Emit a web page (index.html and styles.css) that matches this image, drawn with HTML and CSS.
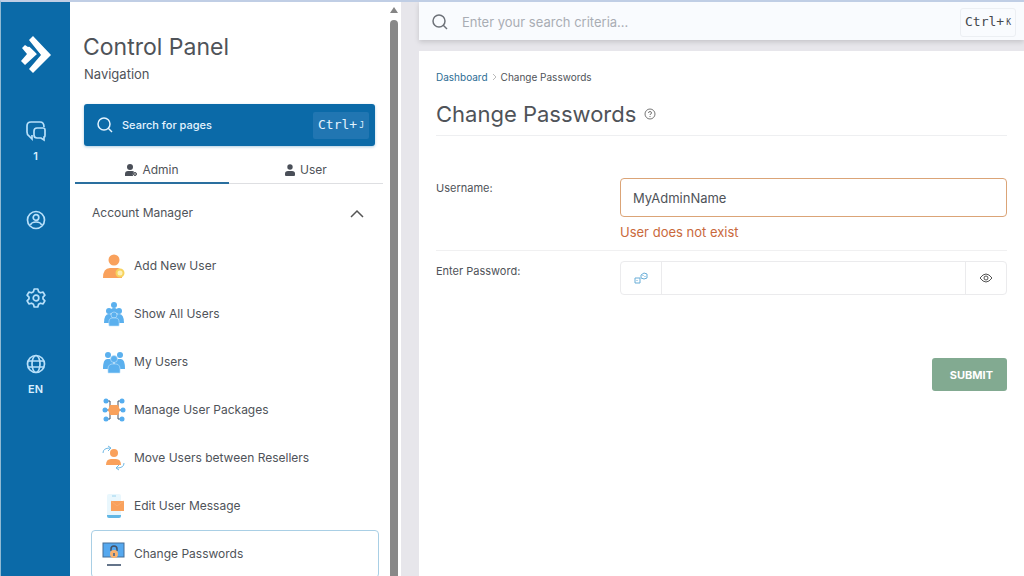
FILE: index.html
```
<!DOCTYPE html>
<html lang="en">
<head>
  <meta charset="UTF-8">
  <title>Change Passwords</title>
  <link rel="stylesheet" href="styles.css">
</head>
<body>
  <nav class="rail">
    <a href="#" class="logo" aria-label="Home">
      <svg width="32" height="40" viewBox="0 0 32 40">
        <path d="M9 5l4-4 18 19-18 18-4-4 12-14z" fill="#fff"/>
        <path d="M2 13l3-3 3 2 3-1 6 8-12 11-4-4 6-7z" fill="#fff"/>
        <path d="M7 8l12 11.500L7 32" fill="none" stroke="#0b6aa8" stroke-width="2"/>
      </svg>
    </a>
    <a href="#" class="rail-item messages" aria-label="Messages">
      <svg class="line-icon" width="22" height="22" viewBox="0 0 22 22">
        <path d="M7 15v4l-3-3q-2-1-2-4V6q0-4 4-4h9q4 0 4 5"/>
        <path d="M12 8h6q2 0 2 2v5q0 2-1 2v3l-3-2h-4q-3 0-3-3v-4q0-3 3-3z"/>
      </svg>
      <span>1</span>
    </a>
    <a href="#" class="rail-item account" aria-label="Account">
      <svg class="line-icon" width="22" height="22" viewBox="0 0 22 22">
        <circle cx="11" cy="11" r="8.500"/>
        <circle cx="11" cy="8.500" r="2.800"/>
        <path d="M5.500 16q1-3 5.500-3t5.500 3"/>
      </svg>
    </a>
    <a href="#" class="rail-item settings" aria-label="Settings">
      <svg class="line-icon" width="22" height="22" viewBox="0 0 22 22">
        <path d="M9.200 2h3.600l.8 2.800 1.800 1 2.700-.7 1.800 3.100-1.900 2 0 1.600 1.900 2-1.800 3.100-2.700-.7-1.800 1-.8 2.800H9.200l-.8-2.800-1.800-1-2.700.7-1.800-3.100 1.900-2 0-1.600-1.900-2 1.800-3.100 2.700.7 1.800-1z" stroke-linejoin="round"/>
        <circle cx="11" cy="11" r="2.800"/>
      </svg>
    </a>
    <a href="#" class="rail-item language" aria-label="Language">
      <svg class="line-icon" width="22" height="22" viewBox="0 0 22 22">
        <circle cx="11" cy="11" r="8.500"/>
        <ellipse cx="11" cy="11" rx="4" ry="8.500"/>
        <path d="M3 8h16M3 14h16"/>
      </svg>
      <span>EN</span>
    </a>
  </nav>

  <aside class="panel">
    <div class="panel-body">
      <h2>Control Panel</h2>
      <p class="subtitle">Navigation</p>

      <button class="page-search">
        <svg width="16" height="16" viewBox="0 0 16 16"><circle cx="7" cy="7" r="6"/><path d="M11 11l4 4"/></svg>
        <span>Search for pages</span>
        <kbd>Ctrl+<small>J</small></kbd>
      </button>

      <div class="tabs">
        <button class="tab active">
          <svg width="12" height="12" viewBox="0 0 12 12"><circle cx="5" cy="3" r="3"/><path d="M0 12V10q0-3 3-3h4q2 0 2 1-2 2-1 4z"/><circle cx="10" cy="10" r="1.500" fill="#aaa" stroke="#4a4f58"/></svg>
          Admin
        </button>
        <button class="tab">
          <svg width="10" height="12" viewBox="0 0 10 12"><circle cx="5" cy="3" r="2.700"/><path d="M0 11V9.500Q0 7 3 7h4q3 0 3 2.500V11q0 1-1 1H1q-1 0-1-1z"/></svg>
          User
        </button>
      </div>

      <button class="group">
        Account Manager
        <svg width="14" height="9" viewBox="0 0 14 9"><path d="M1 8l6-6 6 6"/></svg>
      </button>

      <ul class="menu">
        <li><a href="#">
          <svg width="24" height="26" viewBox="0 0 24 26">
            <circle cx="12" cy="7" r="5.500" fill="#f9a15c"/>
            <path d="M1 25q0-10 7-10h8q4 0 4 10z" fill="#f9a15c"/>
            <circle cx="18" cy="20" r="3.500" fill="#fdf0b8" stroke="#f7d35e" stroke-width="2"/>
          </svg>
          Add New User</a></li>
        <li><a href="#">
          <svg class="people" width="24" height="26" viewBox="0 0 24 26">
            <circle cx="12" cy="4" r="3"/><path d="M8 12q0-5 4-5t4 5z"/>
            <circle cx="7" cy="10" r="3"/><path d="M2 22q0-9 5-9t5 9z"/>
            <circle cx="17" cy="10" r="3"/><path d="M12 22q0-9 5-9t5 9z"/>
            <circle cx="12" cy="14" r="3" stroke="#c5e4fb"/><path d="M7 25q-1-8 3-8h4q4 0 3 8z" stroke="#c5e4fb"/>
          </svg>
          Show All Users</a></li>
        <li><a href="#">
          <svg class="people" width="24" height="26" viewBox="0 0 24 26">
            <circle cx="6" cy="6" r="3"/><path d="M1 20q0-10 4-10h3q4 0 4 10z"/>
            <circle cx="18" cy="6" r="3"/><path d="M12 20q0-10 4-10h3q4 0 4 10z"/>
            <circle cx="12" cy="10" r="3.500" stroke="#c5e4fb"/><path d="M6 24q-1-9 4-9h4q5 0 4 9z" stroke="#c5e4fb"/>
          </svg>
          My Users</a></li>
        <li><a href="#">
          <svg width="24" height="26" viewBox="0 0 24 26">
            <path d="M4 4h4v6h8V4h4M2 13h20M4 22h4v-6h8v6h4" fill="none" stroke="#475264"/>
            <path d="M8 8h8l2 5-2 5H8l-2-5z" fill="#f9a15c"/>
            <g fill="#55adef"><circle cx="4" cy="4" r="2.500"/><circle cx="20" cy="4" r="2.500"/><circle cx="3" cy="13" r="2.500"/><circle cx="21" cy="13" r="2.500"/><circle cx="4" cy="22" r="2.500"/><circle cx="20" cy="22" r="2.500"/></g>
          </svg>
          Manage User Packages</a></li>
        <li><a href="#">
          <svg width="24" height="26" viewBox="0 0 24 26">
            <path d="M1 8q0-5 7-5M6 1l3 2-3 3M22 18q0 5-7 5M17 20l-3 3 3 2" fill="none" stroke="#70b9e5"/>
            <circle cx="12" cy="8" r="4" fill="#f9a15c"/>
            <path d="M4 20q0-6 5-6h5q5 0 5 6z" fill="#f9a15c"/>
          </svg>
          Move Users between Resellers</a></li>
        <li><a href="#">
          <svg width="24" height="26" viewBox="0 0 24 26">
            <rect x="5" y="1" width="14" height="24" rx="2" fill="#e9f7fd"/>
            <path d="M10 3h4" stroke="#9bd3ee"/>
            <path d="M5 22h14v1q0 2-2 2H7q-2 0-2-2z" fill="#62b7e5"/>
            <rect x="9" y="8" width="13" height="10" fill="#f9a15c"/>
            <path d="M9 8l6 5 7-5" fill="none" stroke="#fbac6e"/>
          </svg>
          Edit User Message</a></li>
        <li><a href="#" class="current">
          <svg width="24" height="26" viewBox="0 0 24 26">
            <rect x="1" y="2" width="21" height="14" fill="#55a8ef" stroke="#456c95"/>
            <path d="M9 10V8q0-3 3-3t3 3v2" fill="none" stroke="#475264" stroke-width="1.500"/>
            <circle cx="12" cy="13" r="4" fill="#f9b16f"/>
            <path d="M12 12v3M5 24h14" stroke="#64748a" stroke-width="2"/>
          </svg>
          Change Passwords</a></li>
      </ul>
    </div>
    <div class="scrollbar">
      <svg width="8" height="8" viewBox="0 0 8 8"><path d="M0 7l4-6 4 6z" fill="#858585"/></svg>
      <div class="thumb"></div>
    </div>
  </aside>

  <main>
    <header class="topbar">
      <svg width="16" height="16" viewBox="0 0 16 16"><circle cx="7" cy="7" r="6"/><path d="M11 11l4 4"/></svg>
      <input type="search" placeholder="Enter your search criteria..." aria-label="Search">
      <kbd>Ctrl+<small>K</small></kbd>
    </header>

    <section class="content">
      <div class="breadcrumb">
        <a href="#">Dashboard</a>
        <svg width="5" height="8" viewBox="0 0 5 8"><path d="M1 1l3 3-3 3"/></svg>
        <span>Change Passwords</span>
      </div>
      <div class="title">
        <h1>Change Passwords</h1>
        <svg width="12" height="12" viewBox="0 0 12 12">
          <circle cx="6" cy="6" r="5"/>
          <path d="M4.500 5q0-1.500 1.500-1.500T7.500 5Q7.500 6 6 6.500V7M6 8v1"/>
        </svg>
      </div>

      <form>
        <div class="row">
          <label for="username">Username:</label>
          <div class="field">
            <input type="text" id="username" class="invalid" value="MyAdminName">
            <p class="error">User does not exist</p>
          </div>
        </div>
        <div class="row">
          <label for="password">Enter Password:</label>
          <div class="field password">
            <button type="button" class="generate" aria-label="Generate password">
              <svg width="14" height="14" viewBox="0 0 14 14"><path d="M1 7h5v5H1zM7 4l3-2 3 1v4l-3 1-3-1zM3 9v1M9 4v1M11 5v1"/></svg>
            </button>
            <input type="password" id="password">
            <button type="button" class="reveal" aria-label="Show password">
              <svg width="14" height="10" viewBox="0 0 14 10"><path d="M1 5q6-8 12 0-6 8-12 0z"/><circle cx="7" cy="5" r="2"/></svg>
            </button>
          </div>
        </div>
        <button type="submit" class="submit">SUBMIT</button>
      </form>
    </section>
  </main>
</body>
</html>
```
FILE: styles.css
```
* {
  box-sizing: border-box;
}

body {
  margin: 0;
  height: 100vh;
  display: flex;
  overflow: hidden;
  border-top: 2px solid #c0cee5;
  border-left: 1px solid #8fb9d3;
  background: #e7e6eb;
  color: #4f5359;
  font: 12px/16px Inter, "Liberation Sans", sans-serif;
}

h1, h2, p, ul {
  margin: 0;
  padding: 0;
}

a {
  color: inherit;
  text-decoration: none;
}

button, input {
  font: inherit;
  color: inherit;
  background: none;
  border: 0;
  padding: 0;
}

button {
  cursor: pointer;
}

svg {
  flex: none;
}

kbd {
  font: 13px/26px "DejaVu Sans Mono", monospace;
  white-space: nowrap;
}

kbd small {
  font-size: 8px;
  margin-left: 2px;
  vertical-align: 1px;
}

/* left rail */
.rail {
  width: 69px;
  flex: none;
  background: #0b6aa8;
  display: flex;
  flex-direction: column;
  align-items: center;
  padding-top: 33px;
  color: #d9efff;
}

.logo {
  height: 40px;
}

.rail-item {
  display: flex;
  flex-direction: column;
  align-items: center;
  gap: 6px;
  font-size: 11px;
  font-weight: 600;
}

.messages {
  margin-top: 45px;
}

.account {
  margin-top: 45px;
}

.settings {
  margin-top: 56px;
}

.language {
  margin-top: 44px;
}

.line-icon {
  fill: none;
  stroke: #b8e0fa;
  stroke-width: 1.7;
}

/* navigation panel */
.panel {
  width: 331px;
  flex: none;
  display: flex;
  background: #fff;
}

.panel-body {
  flex: 1;
  overflow: hidden;
  padding: 31px 7px 0 5px;
}

.panel h2 {
  font-size: 23px;
  font-weight: 400;
  line-height: 28px;
  padding-left: 8px;
}

.subtitle {
  font-size: 13px;
  margin-top: 5px;
  padding-left: 9px;
}

.page-search {
  display: flex;
  align-items: center;
  width: calc(100% - 17px);
  height: 42px;
  margin: 22px 8px 9px 9px;
  padding: 0 6px 0 13px;
  border-radius: 3px;
  background: #0b6aa8;
  box-shadow: 0 1px 3px #0b6aa855;
  color: #e3f3ff;
  font-size: 11px;
  font-weight: 500;
}

.page-search svg, .topbar svg {
  fill: none;
  stroke: currentColor;
  stroke-width: 1.5;
}

.page-search span {
  margin: 0 auto 0 9px;
}

.page-search kbd {
  padding: 0 5px;
  border-radius: 2px;
  background: #2176b2;
}

.tabs {
  display: flex;
}

.tab {
  flex: 1;
  display: flex;
  align-items: center;
  justify-content: center;
  gap: 5px;
  height: 29px;
  padding-top: 2px;
  border-bottom: 1px solid #dedfe2;
}

.tab svg {
  fill: #4a4f58;
}

.tab.active {
  border-bottom: 2px solid #2a6f9f;
}

.group {
  display: flex;
  align-items: center;
  justify-content: space-between;
  width: 100%;
  height: 58px;
  padding: 0 19px 0 17px;
}

.group svg {
  fill: none;
  stroke: #555;
  stroke-width: 1.5;
}

.menu {
  list-style: none;
  padding: 0 4px 0 16px;
}

.menu a {
  display: flex;
  align-items: center;
  gap: 8px;
  height: 48px;
  padding-left: 10px;
  border: 1px solid transparent;
  border-radius: 4px;
}

.menu .current {
  border-color: #a9cfe5;
}

.people {
  fill: #5bb0ee;
  stroke-width: 0.6;
}

.scrollbar {
  width: 11px;
  display: flex;
  flex-direction: column;
  align-items: flex-start;
  padding-top: 4px;
}

.thumb {
  flex: 1;
  width: 8px;
  margin-top: 6px;
  border-radius: 4px 4px 0 0;
  background: #888;
}

/* right side */
main {
  flex: 1;
  min-width: 0;
  display: flex;
  flex-direction: column;
  gap: 11px;
  padding-left: 18px;
}

.topbar {
  display: flex;
  align-items: center;
  height: 38px;
  padding: 2px 8px 0 13px;
  background: #f9fbfe;
  box-shadow: 0 2px 5px #00000026;
  color: #6d7178;
}

.topbar input {
  flex: 1;
  min-width: 0;
  margin-left: 14px;
  outline: 0;
  font-size: 13px;
}

.topbar input::placeholder {
  color: #a9adb4;
}

.topbar kbd {
  padding: 0 4px;
  border: 1px solid #eceff3;
  border-radius: 3px;
  color: #44484e;
}

.content {
  flex: 1;
  padding: 18px 17px 0;
  background: #fff;
}

.breadcrumb {
  display: flex;
  align-items: center;
  gap: 4px;
  font-size: 10px;
}

.breadcrumb a {
  color: #2b6d94;
}

.breadcrumb svg {
  fill: none;
  stroke: #bbb;
}

.title {
  display: flex;
  align-items: center;
  gap: 8px;
  height: 51px;
  padding-top: 8px;
  border-bottom: 1px solid #eeeff1;
}

.title h1 {
  font-size: 22px;
  font-weight: 400;
  line-height: 32px;
}

.title svg {
  fill: none;
  stroke: #777;
}

form {
  display: flex;
  flex-direction: column;
  padding-top: 32px;
}

.row {
  display: flex;
  padding: 10px 0;
}

.row + .row {
  border-top: 1px solid #f0f0f1;
}

.row label {
  width: 184px;
  flex: none;
  font-size: 11px;
  line-height: 20px;
}

.field {
  flex: 1;
  min-width: 0;
}

.invalid {
  width: 100%;
  height: 39px;
  padding: 0 12px;
  border: 1px solid #dba477;
  border-radius: 4px;
  font-size: 13px;
}

.error {
  margin-top: 7px;
  color: #c9693c;
  font-size: 13px;
}

.password {
  display: flex;
  height: 34px;
  border: 1px solid #ebebed;
  border-radius: 4px;
}

.password input {
  flex: 1;
  min-width: 0;
  border: 1px solid #ebebed;
  border-width: 0 1px;
}

.password button {
  display: flex;
  align-items: center;
  justify-content: center;
  width: 40px;
}

.password svg {
  fill: none;
  stroke: #555;
}

.password .generate svg {
  stroke: #68add7;
}

.submit {
  align-self: flex-end;
  height: 33px;
  margin-top: 53px;
  padding: 0 14px 0 18px;
  border-radius: 3px;
  background: #82aa91;
  color: #fff;
  font-size: 11px;
  font-weight: 700;
}
```
